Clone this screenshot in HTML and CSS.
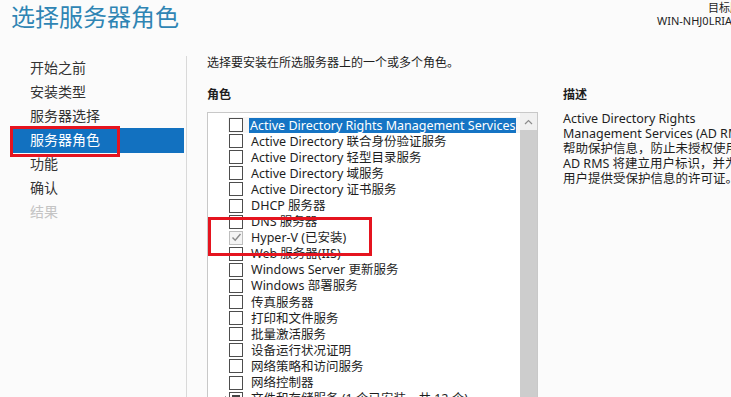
FILE: index.html
```html
<!DOCTYPE html>
<html lang="zh-CN">
<head>
    <meta charset="UTF-8">
    <title>添加角色和功能向导</title>
    <link rel="stylesheet" href="styles.css">
</head>
<body>
<div class="window">
    <header class="top">
        <h1 class="title">选择服务器角色</h1>
        <div class="target">
            <div>目标服务器</div>
            <div>WIN-NHJ0LRIA6K5JQ</div>
        </div>
    </header>
    <div class="wizard">
        <nav class="steps">
            <div class="step">开始之前</div>
            <div class="step">安装类型</div>
            <div class="step">服务器选择</div>
            <div class="step active">服务器角色</div>
            <div class="step">功能</div>
            <div class="step">确认</div>
            <div class="step disabled">结果</div>
        </nav>
        <main class="content">
            <p class="intro">选择要安装在所选服务器上的一个或多个角色。</p>
            <div class="columns">
                <section class="roles">
                    <h2 class="label">角色</h2>
                    <div class="listbox">
                        <ul class="role-list">
                            <li class="role focus"><span class="box"></span><span class="name selected">Active Directory Rights Management Services</span></li>
                            <li class="role"><span class="box"></span><span class="name">Active Directory 联合身份验证服务</span></li>
                            <li class="role"><span class="box"></span><span class="name">Active Directory 轻型目录服务</span></li>
                            <li class="role"><span class="box"></span><span class="name">Active Directory 域服务</span></li>
                            <li class="role"><span class="box"></span><span class="name">Active Directory 证书服务</span></li>
                            <li class="role"><span class="box"></span><span class="name">DHCP 服务器</span></li>
                            <li class="role"><span class="box"></span><span class="name">DNS 服务器</span></li>
                            <li class="role"><span class="box checked">
                                <svg width="11" height="11" viewBox="0 0 11 11"><path d="M1.5 5.5 L4.2 8.3 L9.5 2" fill="none" stroke="#8a8a8a" stroke-width="1.4"/></svg>
                            </span><span class="name">Hyper-V (已安装)</span></li>
                            <li class="role"><span class="box"></span><span class="name">Web 服务器(IIS)</span></li>
                            <li class="role"><span class="box"></span><span class="name">Windows Server 更新服务</span></li>
                            <li class="role"><span class="box"></span><span class="name">Windows 部署服务</span></li>
                            <li class="role"><span class="box"></span><span class="name">传真服务器</span></li>
                            <li class="role"><span class="box"></span><span class="name">打印和文件服务</span></li>
                            <li class="role"><span class="box"></span><span class="name">批量激活服务</span></li>
                            <li class="role"><span class="box"></span><span class="name">设备运行状况证明</span></li>
                            <li class="role"><span class="box"></span><span class="name">网络策略和访问服务</span></li>
                            <li class="role"><span class="box"></span><span class="name">网络控制器</span></li>
                            <li class="role">
                                <span class="expander">
                                    <svg width="8" height="8" viewBox="0 0 8 8"><path d="M7 1 L7 7 L1 7 Z" fill="#444"/></svg>
                                </span>
                                <span class="box partial"></span><span class="name">文件和存储服务 (1 个已安装，共 12 个)</span>
                            </li>
                        </ul>
                        <div class="scrollbar">
                            <div class="sb-up">
                                <svg width="9" height="6" viewBox="0 0 9 6"><path d="M1 5 L4.5 1.5 L8 5" fill="none" stroke="#8c8c8c" stroke-width="1.2"/></svg>
                            </div>
                            <div class="sb-track"></div>
                        </div>
                    </div>
                </section>
                <section class="desc">
                    <h2 class="label">描述</h2>
                    <p class="desc-text">Active Directory Rights<br>Management Services (AD RMS)<br>帮助保护信息，防止未授权使用。<br>AD RMS 将建立用户标识，并为授权<br>用户提供受保护信息的许可证。</p>
                </section>
            </div>
        </main>
    </div>
    <div class="mark mark-nav"></div>
    <div class="mark mark-hyperv"></div>
</div>
</body>
</html>
```

FILE: styles.css
```css
body {
    margin: 0;
    background-color: #fbfbfb;
    font-family: "Noto Sans", "Noto Sans CJK SC", sans-serif;
    color: #1e1e1e;
    overflow: hidden;
}
.window {
    position: relative; /* for the red marks */
    width: 763px;
    height: 397px;
    overflow: hidden;
}
.top {
    display: flex;
    justify-content: space-between;
    height: 56px;
}
.title {
    margin: 0;
    padding-left: 11px;
    font-weight: normal;
    font-size: 24px;
    line-height: 34px;
    color: #2f85b4;
}
.target {
    padding-top: 1px;
    text-align: right;
    font-size: 11px;
    line-height: 13px;
    color: #1e1e1e;
}
.wizard {
    display: flex;
    height: 341px;
}
.steps {
    width: 174px;
    flex-shrink: 0;
    padding-left: 12px;
    border-right: 1px solid #d9d9d9;
}
.step {
    height: 24px;
    line-height: 24px;
    margin-right: 2px;
    padding-left: 18px;
    font-size: 14px;
    color: #333333;
}
.step.active {
    background-color: #1271c0;
    color: #ffffff;
    height: 25px;
    margin-bottom: -1px;
}
.step.disabled {
    color: #c4c4c4;
}
.content {
    padding-left: 20px;
    flex: 1;
    min-width: 0;
}
.intro {
    margin: 0;
    font-size: 12px;
    line-height: 14px;
}
.columns {
    display: flex;
    gap: 25px;
    margin-top: 18px;
}
.label {
    margin: 0 0 10px 0;
    font-size: 12px;
    line-height: 14px;
    font-weight: bold;
}
.roles {
    width: 331px;
    flex-shrink: 0;
}
.listbox {
    display: flex;
    height: 300px;
    background-color: #ffffff;
    border: 1px solid #c8c8c8;
    border-bottom: none;
}
.role-list {
    list-style: none;
    margin: 0;
    padding: 4px 0 0 0;
    flex: 1;
    overflow: hidden;
}
.role {
    display: flex;
    align-items: center;
    height: 16.1px;
    padding-left: 8px;
    font-size: 12.5px;
    white-space: nowrap;
}
.role.focus {
    background-color: #f6f6f6;
    margin-left: 20px;
    padding-left: 1px;
}
.expander {
    width: 13px;
    display: flex;
    align-items: center;
    justify-content: center;
}
.box {
    width: 12px;
    height: 12px;
    margin-left: 13px;
    margin-right: 8px;
    border: 1px solid #4d4d4d;
    background-color: #ffffff;
    display: flex;
    align-items: center;
    justify-content: center;
    flex-shrink: 0;
}
.role.focus .box {
    margin-left: 0;
    margin-right: 7px;
}
.expander + .box {
    margin-left: 0;
}
.box.checked {
    border-color: #bdbdbd;
    background-color: #f4f4f4;
}
.box.partial {
    box-shadow: inset 0 0 0 2px #ffffff, inset 0 0 0 8px #444444;
}
.name {
    line-height: 15px;
}
.name.selected {
    background-color: #1574c4;
    color: #ffffff;
    padding: 0 1px;
    margin-left: -1px;
}
.scrollbar {
    width: 17px;
    display: flex;
    flex-direction: column;
}
.sb-up {
    height: 17px;
    background-color: #f0f0f0;
    display: flex;
    align-items: center;
    justify-content: center;
}
.sb-track {
    flex: 1;
    background-color: #cdcdcd;
}
.desc {
    width: 220px;
    flex-shrink: 0;
}
.desc .label {
    margin-bottom: 9px;
}
.desc-text {
    margin: 0;
    font-size: 12.5px;
    line-height: 15px;
    white-space: nowrap;
}
.mark {
    position: absolute;
    border: 3px solid #e5141f;
}
.mark-nav {
    left: 10px;
    top: 126px;
    width: 104px;
    height: 25px;
}
.mark-hyperv {
    left: 208px;
    top: 217px;
    width: 158px;
    height: 33px;
}
```
